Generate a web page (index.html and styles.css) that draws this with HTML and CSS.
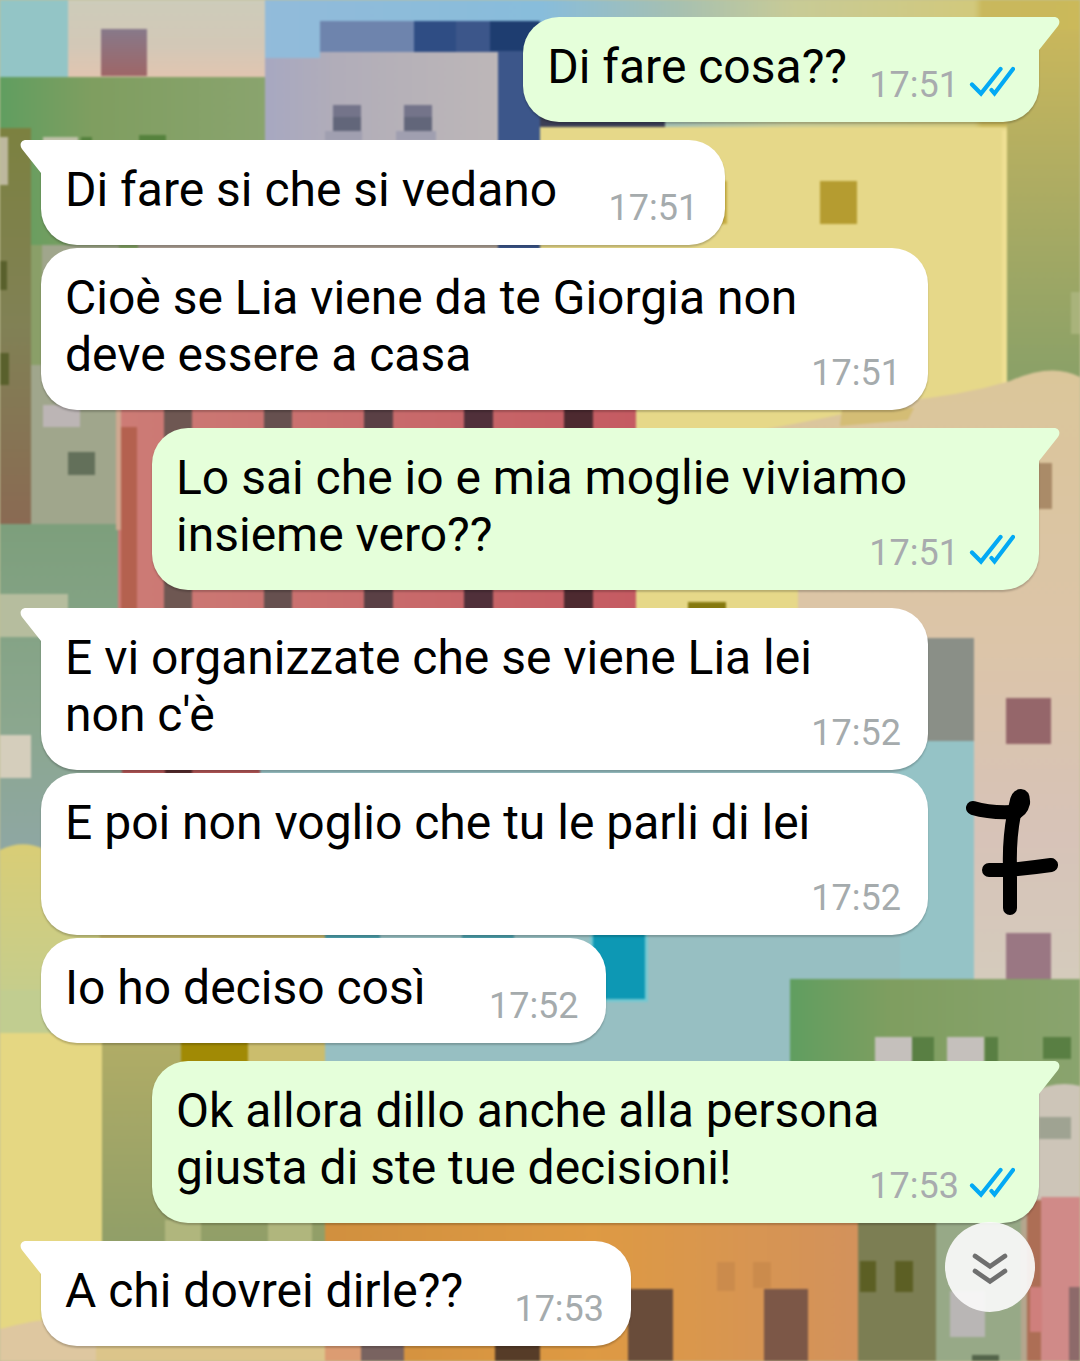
FILE: index.html
```html
<!DOCTYPE html>
<html lang="it">
<head>
<meta charset="utf-8">
<meta name="viewport" content="width=device-width, initial-scale=1">
<title>Chat</title>
<link rel="stylesheet" href="styles.css">
</head>
<body>
<svg class="defs" aria-hidden="true">
  <symbol id="ticks" viewBox="0 0 46 32">
    <path d="M3 18.500L12 27.500L31.500 3M22.500 24L25.500 27.500L44 3" fill="none" stroke="#03a9f4" stroke-width="4.200" stroke-linecap="round"/>
  </symbol>
  <symbol id="tail" viewBox="0 0 22 36">
    <path d="M22 0H6C1 0-1 5 2 9L21 33V36H22Z"/>
  </symbol>
</svg>
<main class="chat">
  <svg class="wallpaper" viewBox="0 0 1080 1361" preserveAspectRatio="xMidYMid slice" aria-hidden="true">
    <defs>
      <linearGradient id="beige" x2="0" y2="1"><stop stop-color="#cdccba"/><stop offset=".6" stop-color="#d3c8b7"/><stop offset="1" stop-color="#e2c5b0"/></linearGradient>
      <linearGradient id="sky"><stop stop-color="#92bbda"/><stop offset=".34" stop-color="#88bddb"/><stop offset=".5" stop-color="#a5c0b2"/><stop offset=".65" stop-color="#c8cb96"/><stop offset=".87" stop-color="#d2c97c"/><stop offset=".88" stop-color="#c9b85d"/><stop offset="1" stop-color="#cbb95a"/></linearGradient>
      <linearGradient id="green"><stop stop-color="#609e60"/><stop offset=".35" stop-color="#7f9e60"/><stop offset="1" stop-color="#8aa46e"/></linearGradient>
      <linearGradient id="lilac"><stop stop-color="#a7a8c1"/><stop offset=".3" stop-color="#b1adb9"/><stop offset="1" stop-color="#bdb7b8"/></linearGradient>
      <linearGradient id="olive" x2="0" y2="1"><stop stop-color="#7c8140"/><stop offset=".5" stop-color="#818155"/><stop offset="1" stop-color="#8a6a53"/></linearGradient>
      <linearGradient id="moss" x2="0" y2="1"><stop stop-color="#c9b75c"/><stop offset=".4" stop-color="#b0ad62"/><stop offset="1" stop-color="#88a068"/></linearGradient>
      <linearGradient id="sand" x2="0" y2="1"><stop stop-color="#dbc69a"/><stop offset=".45" stop-color="#dcc5a9"/><stop offset=".75" stop-color="#d7c3b8"/><stop offset="1" stop-color="#d5ccbd"/></linearGradient>
      <linearGradient id="red"><stop stop-color="#cd7c76"/><stop offset="1" stop-color="#c55b62"/></linearGradient>
      <linearGradient id="teal" x2="0" y2="1"><stop stop-color="#7d9f7c"/><stop offset=".6" stop-color="#8ba78e"/><stop offset="1" stop-color="#8fa7a4"/></linearGradient>
      <linearGradient id="lime" x2="0" y2="1"><stop stop-color="#d9cd76"/><stop offset="1" stop-color="#c0ce92"/></linearGradient>
      <linearGradient id="fern" x2="0" y2="1"><stop stop-color="#b2ad66"/><stop offset="1" stop-color="#8f9e68"/></linearGradient>
      <linearGradient id="orange"><stop stop-color="#d1903f"/><stop offset=".5" stop-color="#de9a43"/><stop offset="1" stop-color="#d3925c"/></linearGradient>
      <linearGradient id="mauve" x2="0" y2="1"><stop stop-color="#87798a"/><stop offset="1" stop-color="#9f6667"/></linearGradient>
    </defs>
    <rect width="1080" height="1361" fill="#97bfc2"/>
    <!-- rooftops -->
    <rect width="68" height="78" fill="#93c5c6"/>
    <rect x="68" width="198" height="78" fill="url(#beige)"/>
    <rect x="101" y="29" width="46" height="47" fill="url(#mauve)"/>
    <rect x="265" width="815" height="128" fill="url(#sky)"/>
    <rect x="320" y="21" width="95" height="34" fill="#6e84ad"/>
    <rect x="414" y="21" width="126" height="230" fill="#3c568a"/>
    <rect x="414" y="21" width="42" height="32" fill="#2f4d84"/>
    <rect x="490" y="21" width="50" height="30" fill="#1e3d70"/>
    <rect x="540" y="116" width="125" height="12" fill="#3d3f57"/>
    <path d="M265 58H320V52H498V260H265Z" fill="url(#lilac)"/>
    <path d="M333 105h28v26h-28zM404 105h28v26h-28z" fill="#74748a"/>
    <path d="M333 117h28v14h-28zM404 117h28v14h-28z" fill="#62667a"/>
    <path d="M325 131h37v10h-37zM396 131h40v10h-40z" fill="#a09fb0"/>
    <!-- green and olive houses -->
    <rect y="77" width="265" height="180" fill="url(#green)"/>
    <rect y="128" width="31" height="396" fill="url(#olive)"/>
    <rect y="137" width="8" height="48" fill="#bdb89e"/>
    <path d="M43 137h35v8h-35z" fill="#bfc1a8"/>
    <path d="M81 137h11v8h-11zM139 135h27v8h-27z" fill="#55823d"/>
    <path d="M0 261h7v29h-7zM0 353h9v32h-9z" fill="#59602c"/>
    <rect x="138" y="240" width="360" height="12" fill="#aca094"/>
    <!-- yellow house -->
    <rect x="540" y="127" width="467" height="485" fill="#e6d889"/>
    <rect x="1002" y="130" width="5" height="260" fill="#efe093"/>
    <rect x="1007" y="30" width="73" height="360" fill="url(#moss)"/>
    <path d="M820 181h37v43h-37z" fill="#b59c30"/>
    <path d="M715 181h12v43h-12z" fill="#c7ae43"/>
    <path d="M1071 292h9v42h-9z" fill="#a9b37b"/>
    <!-- sand hill -->
    <path d="M700 440Q800 425 900 401Q960 396 1010 381Q1052 362 1080 377V990H798V440Z" fill="url(#sand)"/>
    <path d="M842 408H914L908 420L840 426Z" fill="#d4bd75"/>
    <rect x="1036" y="463" width="16" height="46" fill="#aa8b68"/>
    <rect x="688" y="602" width="38" height="10" fill="#85780e"/>
    <!-- grey-green house -->
    <rect x="31" y="245" width="88" height="280" fill="#a0a68c"/>
    <rect x="31" y="245" width="11" height="120" fill="#8a9f68"/>
    <rect x="43" y="405" width="37" height="22" fill="#bcb5b5"/>
    <rect x="68" y="452" width="27" height="23" fill="#63705a"/>
    <rect y="524" width="122" height="330" fill="url(#teal)"/>
    <rect y="594" width="68" height="43" fill="#b6bd9e"/>
    <rect y="735" width="31" height="43" fill="#d5cebc"/>
    <!-- red house -->
    <rect x="118" y="400" width="518" height="220" fill="url(#red)"/>
    <rect x="116" y="400" width="5" height="130" fill="#cfa890"/>
    <rect x="121" y="427" width="16" height="185" fill="#b4614f"/>
    <path d="M164 400h28v220h-28z" fill="#6e5752"/>
    <path d="M264 400h28v220h-28z" fill="#66504f"/>
    <path d="M364 400h29v220h-29z" fill="#5a4045"/>
    <path d="M464 400h29v220h-29z" fill="#50303a"/>
    <path d="M564 400h29v220h-29z" fill="#4d2a30"/>
    <rect x="122" y="765" width="138" height="12" fill="#b15656"/>
    <rect x="165" y="765" width="27" height="12" fill="#562c2d"/>
    <!-- blue house -->
    <rect x="260" y="765" width="714" height="215" fill="#97bfc2"/>
    <rect x="900" y="638" width="74" height="104" fill="#8a8f87"/>
    <rect x="900" y="741" width="74" height="240" fill="#95c3c6"/>
    <rect x="1006" y="698" width="45" height="46" fill="#95666a"/>
    <rect x="1006" y="933" width="45" height="46" fill="#9a7783"/>
    <rect x="40" y="850" width="285" height="190" fill="#c4b56c"/>
    <path d="M0 850Q22 839 44 849Q60 856 100 870V1035H0Z" fill="url(#lime)"/>
    <rect y="990" width="102" height="43" fill="#c1cd90"/>
    <path d="M325 930h55v12h-55zM462 930h52v12h-52z" fill="#4d9fab"/>
    <rect x="590" y="930" width="58" height="72" fill="#75c8d1"/>
    <rect x="593" y="930" width="52" height="69" fill="#0d98b4"/>
    <!-- green house, lower right -->
    <rect x="790" y="979" width="290" height="120" fill="url(#green)"/>
    <path d="M875 1037h37v30h-37zM947 1037h37v30h-37z" fill="#c5c0bc"/>
    <path d="M912 1037h22v30h-22zM985 1037h13v30h-13zM1043 1037h28v22h-28z" fill="#597f43"/>
    <path d="M1030 1093Q1056 1080 1080 1086V1200H1030Z" fill="#cdc5b8"/>
    <rect x="1039" y="1117" width="32" height="22" fill="#9fa392"/>
    <!-- lower left houses -->
    <rect y="1033" width="102" height="300" fill="#e5d782"/>
    <rect x="102" y="1033" width="223" height="220" fill="url(#fern)"/>
    <rect x="181" y="1033" width="67" height="40" fill="#a18a05"/>
    <rect x="248" y="1033" width="77" height="40" fill="#cbbd6d"/>
    <path d="M165 1220h36v25h-36zM268 1220h44v25h-44z" fill="#b0b67d"/>
    <path d="M0 1329Q40 1318 60 1320L325 1340V1361H0Z" fill="#dec7a0"/>
    <path d="M96 1340H325V1361H96Z" fill="#dcc58a"/>
    <!-- orange house -->
    <rect x="325" y="1210" width="534" height="151" fill="url(#orange)"/>
    <rect x="325" y="1340" width="36" height="21" fill="#dc9c72"/>
    <rect x="361" y="1340" width="43" height="21" fill="#796360"/>
    <rect x="495" y="1340" width="45" height="21" fill="#563c28"/>
    <rect x="628" y="1289" width="45" height="72" fill="#694c3a"/>
    <rect x="764" y="1289" width="44" height="72" fill="#7c5747"/>
    <path d="M717 1262h18v29h-18zM753 1262h18v26h-18z" fill="#cb8b4c"/>
    <rect x="858" y="1210" width="78" height="151" fill="#7c7e53"/>
    <path d="M860 1261h16v31h-16zM895 1261h18v31h-18z" fill="#5c5f24"/>
    <rect x="936" y="1200" width="91" height="161" fill="#97a987"/>
    <rect x="950" y="1291" width="35" height="46" fill="#b9b6b5"/>
    <rect x="972" y="1355" width="27" height="6" fill="#53644a"/>
    <rect x="1021" y="1205" width="6" height="156" fill="#b5a68e"/>
    <rect x="1027" y="1200" width="15" height="161" fill="#ad6e55"/>
    <rect x="1041" y="1197" width="39" height="164" fill="#d08a88"/>
    <rect x="1030" y="1287" width="12" height="45" fill="#cf7f7c"/>
    <rect x="1069" y="1287" width="11" height="74" fill="#8d6a6a"/>
  </svg>

  <article class="msg out first">
    <svg class="tail"><use href="#tail"/></svg>
    <p class="text">Di fare cosa??<span class="meta"><time>17:51</time><svg class="ticks" role="img" aria-label="Letto"><use href="#ticks"/></svg></span></p>
  </article>
  <article class="msg in first">
    <svg class="tail"><use href="#tail"/></svg>
    <p class="text">Di fare si che si vedano<span class="meta"><time>17:51</time></span></p>
  </article>
  <article class="msg in">
    <p class="text">Cioè se Lia viene da te Giorgia non deve essere a casa<span class="meta"><time>17:51</time></span></p>
  </article>
  <article class="msg out first">
    <svg class="tail"><use href="#tail"/></svg>
    <p class="text">Lo sai che io e mia moglie viviamo insieme vero??<span class="meta"><time>17:51</time><svg class="ticks" role="img" aria-label="Letto"><use href="#ticks"/></svg></span></p>
  </article>
  <article class="msg in first">
    <svg class="tail"><use href="#tail"/></svg>
    <p class="text">E vi organizzate che se viene Lia lei non c'è<span class="meta"><time>17:52</time></span></p>
  </article>
  <article class="msg in">
    <p class="text">E poi non voglio che tu le parli di lei<span class="meta"><time>17:52</time></span></p>
  </article>
  <article class="msg in">
    <p class="text">Io ho deciso così<span class="meta meta-wide"><time>17:52</time></span></p>
  </article>
  <article class="msg out first">
    <svg class="tail"><use href="#tail"/></svg>
    <p class="text">Ok allora dillo anche alla persona giusta di ste tue decisioni!<span class="meta"><time>17:53</time><svg class="ticks" role="img" aria-label="Letto"><use href="#ticks"/></svg></span></p>
  </article>
  <article class="msg in first">
    <svg class="tail"><use href="#tail"/></svg>
    <p class="text">A chi dovrei dirle??<span class="meta"><time>17:53</time></span></p>
  </article>

  <svg class="doodle" viewBox="0 0 96 136" role="img" aria-label="7">
    <path d="M11 24Q28 29 50 28M52 30Q47 56 48 84V124M27 86L46 86Q68 84 89 81" fill="none" stroke="#000" stroke-width="14" stroke-linecap="round"/>
    <path d="M47 20Q49 5 59 5Q69 6 68 20Q65 33 53 36L45 28Z"/>
  </svg>
  <button class="jump" type="button" aria-label="Vai in fondo">
    <svg viewBox="0 0 40 40" aria-hidden="true"><path d="M5 9L20 19.500L35 9M5 24L20 34.500L35 24" fill="none" stroke="#6f6f6f" stroke-width="4.600" stroke-linecap="round"/></svg>
  </button>
</main>
</body>
</html>
```
FILE: styles.css
```css
* {
  box-sizing: border-box;
}

body {
  margin: 0;
  font-family: Roboto, "Liberation Sans", sans-serif;
  color: #000;
}

.defs {
  display: none;
}

.chat {
  position: relative;
  z-index: 0;
  display: flex;
  flex-direction: column;
  gap: 3px;
  min-height: 100vh;
  padding: 2px 41px 15px;
  overflow: hidden;
  background: #c0bf96;
}

.wallpaper {
  position: absolute;
  inset: 0;
  z-index: -1;
  width: 100%;
  height: 100%;
  filter: blur(1px);
}

.msg {
  position: relative;
  max-width: 887px;
  border-radius: 36px;
  box-shadow: 0 2px 2px rgba(0, 0, 0, 0.2);
}

.msg.first {
  margin-top: 15px;
}

.in {
  align-self: flex-start;
  background: #fff;
  fill: #fff;
}

.out {
  align-self: flex-end;
  background: #e5ffda;
  fill: #e5ffda;
}

.in.first {
  border-top-left-radius: 0;
}

.out.first {
  border-top-right-radius: 0;
}

.text {
  display: flow-root;
  margin: 0;
  padding: 21px 24px 27px;
  font-size: 48px;
  line-height: 57px;
}

/* Floats to the end of the last line, or to a line of its own when it does not fit. */
.meta {
  float: right;
  display: flex;
  align-items: center;
  justify-content: flex-end;
  gap: 10px;
  width: 144px;
  margin: 26px 0 -11px;
  padding-right: 3px;
  font-size: 36px;
  line-height: 42px;
  color: #a5abad;
}

.meta-wide {
  width: 156px;
}

.out .meta {
  width: 168px;
  padding-right: 0;
  color: #a8abae;
}

.ticks {
  width: 46px;
  height: 32px;
  margin-bottom: 6px;
}

.tail {
  position: absolute;
  top: 0;
  width: 22px;
  height: 36px;
}

.in .tail {
  left: -21px;
}

.out .tail {
  right: -21px;
  transform: scaleX(-1);
}

.doodle {
  position: absolute;
  right: 22px;
  bottom: 441px;
  width: 96px;
  height: 136px;
}

.jump {
  position: absolute;
  right: 45px;
  bottom: 49px;
  display: grid;
  place-items: center;
  width: 90px;
  height: 90px;
  padding: 0;
  border: 0;
  border-radius: 50%;
  background: rgba(250, 250, 250, 0.92);
}

.jump svg {
  width: 40px;
  height: 40px;
}
```
